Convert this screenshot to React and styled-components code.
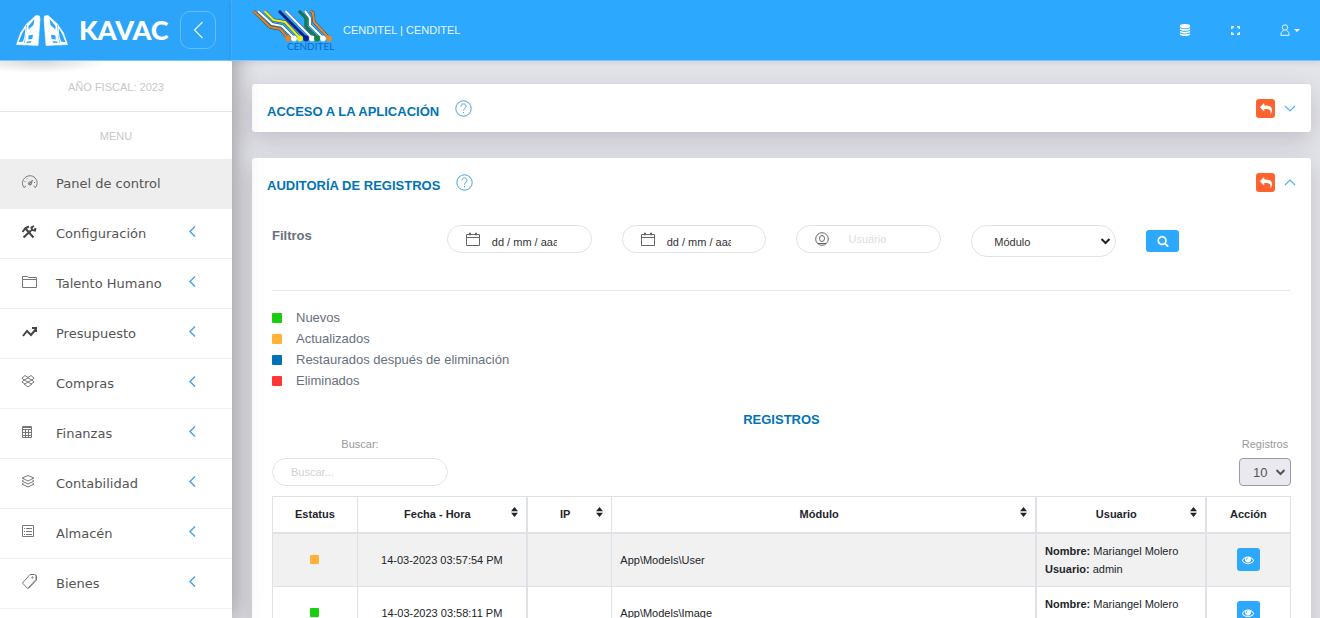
import React from "react";
import styled, { createGlobalStyle, css } from "styled-components";

const GlobalStyle = createGlobalStyle`
  *, *::before, *::after { box-sizing: border-box; }
  body {
    margin: 0;
    background: #e3e3ea;
    color: #212529;
    font-family: "Liberation Sans", Arial, sans-serif;
    font-size: 11px;
    line-height: 18px;
  }
  button, input, select { font-family: inherit; margin: 0; }
`;

const Shell = styled.div`
  display: flex;
  height: 100vh;
  overflow: hidden;
`;

const Sidebar = styled.aside`
  flex: 0 0 232px;
  z-index: 2;
  background: #fff;
  box-shadow: 0 2px 22px rgba(0, 0, 0, 0.16), 0 2px 28px rgba(0, 0, 0, 0.26);
`;

const Brand = styled.div`
  display: flex;
  align-items: center;
  height: 61px;
  padding: 0 15px 0 16px;
  background: #2ba4f9;
  border-right: 1px solid #45b2ff;
  border-bottom: 1px solid #7cc8fc;
`;

const BrandLink = styled.a`
  display: flex;
  align-items: center;
  gap: 11px;
  color: #fff;
  text-decoration: none;
  font: 900 27px/32px Lato, sans-serif;
`;

const CollapseButton = styled.button`
  display: grid;
  place-items: center;
  width: 36px;
  height: 38px;
  margin-left: auto;
  padding: 0;
  border: 1px solid #63bdfc;
  border-radius: 10px;
  background: transparent;
  color: #e4f4ff;
`;

const SideNote = styled.p`
  margin: 0;
  height: ${(p) => (p.$ruled ? 51 : 47)}px;
  padding-top: ${(p) => (p.$ruled ? 17 : 15)}px;
  border-bottom: ${(p) => (p.$ruled ? "1px solid #e6e6e6" : "0")};
  background: ${(p) => (p.$ruled ? "radial-gradient(ellipse 70px 12px at 38px 0, rgba(0, 0, 0, 0.16), transparent)" : "none")};
  color: #c8c8c8;
  text-align: center;
`;

const Menu = styled.nav`
  display: flex;
  flex-direction: column;
`;

const MenuLink = styled.a`
  display: flex;
  align-items: center;
  height: 50px;
  padding: 0 35px 0 20px;
  border-bottom: 1px solid ${(p) => (p.$active ? "#eee" : "#f1f1f1")};
  background: ${(p) => (p.$active ? "#eee" : "#fff")};
  color: #555;
  font: 13px/20px "DejaVu Sans", sans-serif;
  text-decoration: none;
`;

const MenuIcon = styled.span`
  display: flex;
  width: 36px;
  padding-bottom: 4px;
  color: ${(p) => (p.$solid ? "#444" : "#777")};
`;

const MenuArrow = styled.span`
  display: flex;
  margin-left: auto;
  padding-bottom: 4px;
  color: #4da5df;
`;

const Page = styled.div`
  flex: 1;
  min-width: 0;
  display: flex;
  flex-direction: column;
`;

const Topbar = styled.header`
  display: flex;
  align-items: center;
  flex: 0 0 61px;
  z-index: 3;
  padding: 0 20px 0 21px;
  background: #2ca8ff;
  border-bottom: 1px solid #7cc8fc;
  box-shadow: 0 1px 6px rgba(0, 0, 0, 0.1);
  color: #fff;
`;

const Institution = styled.span`
  margin-left: 5px;
  color: #e9f6ff;
`;

const Tools = styled.div`
  display: flex;
  align-items: center;
  gap: 40px;
  margin-left: auto;
`;

const ToolButton = styled.button`
  display: flex;
  align-items: center;
  gap: 4px;
  padding: 0;
  border: 0;
  background: none;
  color: #fff;
`;

const Main = styled.main`
  flex: 1;
  min-height: 0;
  display: flex;
  flex-direction: column;
  gap: 26px;
  padding: 23px 9px 30px 20px;
  overflow-y: auto;
  scrollbar-width: none;
`;

const Card = styled.section`
  flex: none;
  min-height: 48px;
  border-radius: 3px;
  background: #fff;
  box-shadow: 0 8px 24px rgba(0, 0, 0, 0.16);
`;

const CardHead = styled.header`
  display: flex;
  align-items: center;
  height: 47px;
  padding: 2px 15px 0;
`;

const Title = styled.h2`
  margin: 0;
  padding-top: 6px;
  color: #0073b7;
  font-size: 13px;
  line-height: 20px;
  text-transform: uppercase;
  text-align: ${(p) => (p.$centered ? "center" : "left")};
`;

const IconButton = styled.button`
  display: flex;
  padding: 0;
  border: 0;
  background: none;
  color: #50b4fa;
`;

const CardActions = styled.div`
  display: flex;
  align-items: center;
  gap: 9px;
  margin-left: auto;
`;

const Help = styled(IconButton)`
  margin-left: 16px;
  color: #4b9fd6;
`;

const fill = css`
  display: grid;
  place-items: center;
  padding: 0;
  border: 0;
  border-radius: 3px;
  color: #fff;
`;

const BackButton = styled.button`
  ${fill}
  width: 19px;
  height: 19px;
  background: #ff6430;
`;

const PrimaryButton = styled.button`
  ${fill}
  width: ${(p) => p.$width}px;
  height: ${(p) => p.$height}px;
  background: #2ca8ff;
`;

const CardBody = styled.div`
  padding: 20px 20px 30px;
`;

const Filters = styled.form`
  display: grid;
  grid-template-columns: repeat(6, minmax(0, 1fr));
  gap: 30px;
  align-items: start;
  padding-bottom: 33px;
  border-bottom: 1px solid #e8e8e8;
`;

const FiltersLabel = styled.strong`
  padding-top: 1px;
  color: #687080;
  font-size: 13px;
  line-height: 20px;
`;

const Field = styled.label`
  display: flex;
  align-items: center;
  height: 28px;
  padding-left: 18px;
  border: 1px solid #e3e3e3;
  border-radius: 30px;
  color: #666;
  & > svg { flex: none; }
`;

const FieldInput = styled.input`
  flex: 1;
  min-width: 0;
  width: 100%;
  height: 26px;
  padding: ${(p) => (p.$date ? "6px 34px 0 12px" : "0 18px 0 19px")};
  border: 0;
  outline: 0;
  background: transparent;
  color: #333;
  font-size: 11px;
  &::placeholder { color: ${(p) => (p.$date ? "#333" : "#ddd")}; opacity: 1; }
`;

const SelectWrap = styled.div`
  position: relative;
  display: flex;
  color: ${(p) => (p.$small ? "#555" : "#222")};
  & > svg {
    position: absolute;
    right: 5px;
    top: 50%;
    transform: translateY(-50%);
    pointer-events: none;
  }
`;

const ModuleSelect = styled.select`
  appearance: none;
  width: 100%;
  height: 32px;
  padding: 2px 22px 0;
  border: 1px solid #e3e3e3;
  border-radius: 30px;
  background: #fff;
  color: #333;
  font-size: 11px;
`;

const SearchCell = styled.div`
  padding-top: 5px;
`;

const Legend = styled.ul`
  margin: 0;
  padding: 16px 0 13px;
  list-style: none;
`;

const LegendItem = styled.li`
  display: flex;
  align-items: center;
  gap: 14px;
  color: #687080;
  font-size: 13px;
  line-height: 21px;
`;

const Mark = styled.span`
  display: inline-block;
  flex: none;
  width: ${(p) => p.$size}px;
  height: ${(p) => p.$size}px;
  border-radius: 1px;
  background: ${(p) => p.$color};
`;

const TableTools = styled.div`
  display: flex;
  justify-content: space-between;
  padding: 5px 0 10px;
`;

const ToolLabel = styled.label`
  display: flex;
  flex-direction: column;
  align-items: center;
  gap: 5px;
  color: #9a9a9a;
`;

const SearchInput = styled.input`
  width: 176px;
  height: 28px;
  padding: 0 18px;
  border: 1px solid #e3e3e3;
  border-radius: 30px;
  background: #fff;
  font-size: 11px;
  &::placeholder { color: #d2d2d2; opacity: 1; }
`;

const PageSelect = styled.select`
  appearance: none;
  width: 52px;
  height: 28px;
  padding: 1px 13px 0;
  border: 1px solid #9b9ba6;
  border-radius: 4px;
  background: #e9e9ef;
  color: #555;
  font-size: 13px;
`;

const Table = styled.table`
  width: 100%;
  table-layout: fixed;
  border-collapse: collapse;
`;

const Th = styled.th`
  position: relative;
  width: ${(p) => p.$width};
  height: 36px;
  padding: 0 ${(p) => (p.$sortable ? 9 : 0)}px 0 0;
  border: 1px solid #dee2e6;
  border-right-width: ${(p) => (p.$heavy ? 2 : 1)}px;
  border-bottom-width: 2px;
  & > svg { position: absolute; right: 8px; top: 10px; }
`;

const Row = styled.tr`
  background: ${(p) => (p.$striped ? "#f1f1f1" : "#fff")};
`;

const Td = styled.td`
  padding: 8px;
  border: 1px solid #dee2e6;
  border-right-width: ${(p) => (p.$heavy ? 2 : 1)}px;
  text-align: ${(p) => (p.$centered ? "center" : "left")};
  & > button { margin: 0 auto; }
`;

const Stroke = ({ w = 14, h = w, box = `0 0 ${w} ${h}`, sw = 1, children }) => (
  <svg width={w} height={h} viewBox={box} fill="none" stroke="currentColor" strokeWidth={sw} aria-hidden="true">
    {children}
  </svg>
);

const Solid = ({ size = 12, box = "0 0 1792 1792", d }) => (
  <svg width={size} height={size} viewBox={box} fill="currentColor" aria-hidden="true">
    <path d={d} />
  </svg>
);

const REPLY = "M1792 1120q0 166-127 451-3 7-10.5 24t-13.5 30-13 22q-12 17-28 17-15 0-23.5-10t-8.5-25q0-9 2.5-26.5t2.5-23.5q5-68 5-123 0-101-17.5-181t-48.5-138.5-80-101-105.5-69.5-133-42.5-154-21.5-175.5-6h-224v256q0 26-19 45t-45 19-45-19l-512-512q-19-19-19-45t19-45l512-512q19-19 45-19t45 19 19 45v256h224q713 0 875 403 53 134 53 333z";
const SEARCH = "M1216 832q0-185-131.5-316.5t-316.5-131.5-316.5 131.5-131.5 316.5 131.5 316.5 316.5 131.5 316.5-131.5 131.5-316.5zm512 832q0 52-38 90t-90 38q-54 0-90-38l-343-342q-179 124-399 124-143 0-273.5-55.5t-225-150-150-225-55.5-273.5 55.5-273.5 150-225 225-150 273.5-55.5 273.5 55.5 225 150 150 225 55.5 273.5q0 220-124 399l343 343q37 37 37 90z";
const EYE = "M1664 960q-152-236-381-353 61 104 61 225 0 185-131.5 316.5t-316.5 131.5-316.5-131.5-131.5-316.5q0-121 61-225-229 117-381 353 133 205 333.5 326.5t434.5 121.5 434.5-121.5 333.5-326.5zm-720-384q0-20-14-34t-34-14q-125 0-214.5 89.5t-89.5 214.5q0 20 14 34t34 14 34-14 14-34q0-86 61-147t147-61q20 0 34-14t14-34zm848 384q0 34-20 69-140 230-376.5 368.5t-499.5 138.5-499.5-139-376.5-368q-20-35-20-69t20-69q140-229 376.5-368t499.5-139 499.5 139 376.5 368q20 35 20 69z";
const DATABASE = "M896 768q237 0 443-43t325-127v170q0 69-103 128t-280 93.5-385 34.5-385-34.5-280-93.5-103-128v-170q119 84 325 127t443 43zm0 768q237 0 443-43t325-127v170q0 69-103 128t-280 93.5-385 34.5-385-34.5-280-93.5-103-128v-170q119 84 325 127t443 43zm0-384q237 0 443-43t325-127v170q0 69-103 128t-280 93.5-385 34.5-385-34.5-280-93.5-103-128v-170q119 84 325 127t443 43zm0-1152q208 0 385 34.5t280 93.5 103 128v128q0 69-103 128t-280 93.5-385 34.5-385-34.5-280-93.5-103-128v-128q0-69 103-128t280-93.5 385-34.5z";

const KavacMark = () => (
  <svg width="52" height="31" viewBox="0 0 52 31" aria-hidden="true">
    {["left", "right"].map((side) => (
      <g key={side} transform={side === "right" ? "translate(52 0) scale(-1 1)" : undefined}>
        <path d="M20 .5l3.500.5.500 3-2 26.500L.5 29.500 4.500 18l6-9z" fill="#fff" stroke="#fff" strokeWidth="0.600" strokeLinejoin="round" />
        <path
          d="M6 18.500l3.500-5.500-1 8.500-1.500 5-4.500.8zM12.500 11L18.500 4l-1 6-5 4.500zM12.500 20.500l4.500-.8-.7 4.300-4 .5zM11 9.500l-.8 8-1.500 10.500-.6-.1 2-10.400.2-7zM10.800 26.500l4.500-.3-.3 1.500-4.500.2z"
          fill="#2ba4f9"
        />
      </g>
    ))}
  </svg>
);

const circuits = [
  ["#e88224", 35, "M.5 2L17 18 27 20 35 29"],
  ["#fff", 41, "M5 2L19 15 29 17 41 29"],
  ["#f5ee16", 47, "M11.500 2L20.500 11 32 13 47 29"],
  ["#0a1e9b", 53, "M26 2L53 29"],
  ["#fff", 59, "M32.500 2L59 29"],
  ["#16813a", 64, "M46 2L53 9V18L64 29"],
  ["#fff", 70, "M52 2L57 9V16L70 29"],
  ["#e88a28", 76, "M57.500 2L60 4 61 13 76 29"],
];

const InstitutionLogo = () => (
  <svg width="85" height="43" viewBox="0 0 85 43" role="img" aria-label="CENDITEL">
    {circuits.map(([color, , d]) => (
      <g key={d} fill="none">
        <path d={d} stroke="#24445f" strokeWidth="3" />
        <path d={d} stroke={color} strokeWidth="2.200" />
      </g>
    ))}
    {circuits.map(([color, x]) => <circle key={x} cx={x} cy="29.500" r="2.900" fill={color} />)}
    <text x="34" y="41" fill="#1565c0" fontFamily="Lato, sans-serif" fontSize="10">CENDITEL</text>
  </svg>
);

const menuIcons = {
  gauge: (
    <Stroke w={19} h={15}>
      <path d="M6 12l-2 1.500C2 11 2 8 3.500 5.500 6 1.500 11 .8 14 3c3.500 2.500 4 7 1.500 10.500L13.500 12M9 10l3.500-4L11 10.500z" />
      <path d="M4.500 7.500h1M7 4.500l.7.700M14 8.500h1" />
      <circle cx="9.800" cy="9.500" r="1.500" />
    </Stroke>
  ),
  tools: (
    <Stroke w={18} h={16} sw={2}>
      <path d="M2.500 8l3-4L9 2.500M5 4l8.500 9.500" />
      <path d="M3.500 13.500l7.500-7M14 2l-2.500 1.500.5 2.500 3 .5L15.500 4" />
    </Stroke>
  ),
  folder: (
    <Stroke w={19} h={16}>
      <path d="M2.500 13.500v-11h5l1 1h8v10zM2.500 5.500h14" />
    </Stroke>
  ),
  trend: (
    <Stroke w={19} h={14} sw={2}>
      <path d="M3 11l4-5 4 4 5-6" />
      <path d="M12 3h4v4" />
    </Stroke>
  ),
  box: (
    <Stroke w={17} h={15}>
      <path d="M5 1.500L2 4l2 2-2 2 3 2 3-2 3 2 3-2-2-2 2-2-3-2.500-3 2zM4 6l4-2 4 2-4 2zM4 10l4 3 4-3" />
    </Stroke>
  ),
  calculator: (
    <Stroke w={14} h={16}>
      <path d="M2.500 2.500h9v11h-9zM2.500 3.500h9M2.500 5.500h9M5.500 6v7M8.500 6v7M3 8.500h8M3 11.500h8" />
    </Stroke>
  ),
  layers: (
    <Stroke w={16} h={15}>
      <path d="M8 1.500l6 2.500-6 3-6-3zM3.500 6L2 7l6 3 6-3-1.500-1M3.500 9L2 10l6 3 6-3-1.500-1" />
    </Stroke>
  ),
  list: (
    <Stroke w={16} h={15}>
      <path d="M2.500 1.500h11v11h-11zM4 4.500h1M4 7.500h1M4 10.500h1M6 4.500h6M6 7.500h6M6 10.500h6" />
    </Stroke>
  ),
  tag: (
    <Stroke w={19} h={17}>
      <path d="M10 1.500h4.500l1.500 1v4L7.500 15.500l-5-5.500zM15 1.500l1.500 1.500v4l-8 8.500" />
      <circle cx="12.500" cy="4.500" r="0.700" />
    </Stroke>
  ),
};

const menu = [
  ["Panel de control", "gauge"],
  ["Configuración", "tools"],
  ["Talento Humano", "folder"],
  ["Presupuesto", "trend"],
  ["Compras", "box"],
  ["Finanzas", "calculator"],
  ["Contabilidad", "layers"],
  ["Almacén", "list"],
  ["Bienes", "tag"],
];

const CalendarIcon = () => (
  <Stroke w={14} h={14}>
    <path d="M.5 2.500h13v11H.5zM.5 5.500h13M3.500 1h1v2h-1zM9.500 1h1v2h-1z" />
  </Stroke>
);

const UserIcon = () => (
  <Stroke w={14} h={14}>
    <circle cx="7" cy="7" r="6.300" />
    <ellipse cx="7" cy="6.500" rx="2.500" ry="3" />
    <path d="M3 11.500h8" />
  </Stroke>
);

const SelectArrow = () => (
  <Stroke w={11} h={8} sw={2}>
    <path d="M1.500 2l4 4 4-4" />
  </Stroke>
);

const SortIcon = () => (
  <svg width="7" height="10" viewBox="0 0 7 10" fill="#212529" aria-hidden="true">
    <path d="M3.500 0L7 4.200H0zM0 5.800h7L3.500 10z" />
  </svg>
);

function Panel({ title, open, children }) {
  return (
    <Card>
      <CardHead>
        <Title>{title}</Title>
        <Help type="button" aria-label="Ayuda">
          <Stroke w={17} h={17}>
            <circle cx="8.500" cy="8.500" r="7.700" />
            <path d="M6 6.500c0-3.500 5-3.500 5 0 0 2-2.500 2-2.500 4M8.500 12v1.200" />
          </Stroke>
        </Help>
        <CardActions>
          <BackButton type="button" aria-label="Volver"><Solid size={12} d={REPLY} /></BackButton>
          <IconButton type="button" aria-label={open ? "Contraer" : "Expandir"}>
            <Stroke w={12} h={7} sw={1.2}>
              <path d={open ? "M1 6l5-5 5 5" : "M1 1l5 5 5-5"} />
            </Stroke>
          </IconButton>
        </CardActions>
      </CardHead>
      {children}
    </Card>
  );
}

const GREEN = "#18ce0f";
const ORANGE = "#ffb236";

const legend = [
  ["Nuevos", GREEN],
  ["Actualizados", ORANGE],
  ["Restaurados después de eliminación", "#0073b7"],
  ["Eliminados", "#ff3636"],
];

const columns = [
  { label: "Estatus", width: "8.333%" },
  { label: "Fecha - Hora", width: "16.667%", sort: true, heavy: true },
  { label: "IP", width: "8.333%", sort: true },
  { label: "Módulo", width: "41.667%", sort: true, heavy: true },
  { label: "Usuario", width: "16.667%", sort: true, heavy: true },
  { label: "Acción", width: "8.333%" },
];

const records = [
  { color: ORANGE, date: "14-03-2023 03:57:54 PM", model: "App\\Models\\User" },
  { color: GREEN, date: "14-03-2023 03:58:11 PM", model: "App\\Models\\Image" },
];

export default function App() {
  return (
    <>
      <GlobalStyle />
      <Shell>
        <Sidebar>
          <Brand>
            <BrandLink href="#"><KavacMark />KAVAC</BrandLink>
            <CollapseButton type="button" aria-label="Contraer menú">
              <Stroke w={11} h={18} sw={1.2}><path d="M9.500 1L1.500 9l8 8" /></Stroke>
            </CollapseButton>
          </Brand>
          <SideNote $ruled>AÑO FISCAL: 2023</SideNote>
          <SideNote>MENU</SideNote>
          <Menu>
            {menu.map(([label, icon], i) => (
              <MenuLink key={label} href="#" $active={i === 0}>
                <MenuIcon $solid={icon === "tools" || icon === "trend"}>{menuIcons[icon]}</MenuIcon>
                {label}
                {i > 0 && (
                  <MenuArrow>
                    <Stroke w={9} h={11} sw={1.5}><path d="M7 .5L2 5.500l5 5" /></Stroke>
                  </MenuArrow>
                )}
              </MenuLink>
            ))}
          </Menu>
        </Sidebar>
        <Page>
          <Topbar>
            <InstitutionLogo />
            <Institution>CENDITEL | CENDITEL</Institution>
            <Tools>
              <ToolButton type="button" aria-label="Respaldos"><Solid size={12} d={DATABASE} /></ToolButton>
              <ToolButton type="button" aria-label="Pantalla completa">
                <Stroke w={9} h={9} sw={1.4}>
                  <path d="M.8 3V.8H3M6 .8h2.200V3M8.200 6v2.200H6M3 8.200H.8V6" />
                </Stroke>
              </ToolButton>
              <ToolButton type="button" aria-label="Usuario">
                <Stroke w={10} h={12} sw={0.9}>
                  <circle cx="5" cy="3.500" r="2.700" />
                  <path d="M3.500 6.500C1.500 7.500 1 9 .8 11.300h8.400C9 9 8.500 7.500 6.500 6.500" />
                </Stroke>
                <svg width="6" height="3" viewBox="0 0 6 3" fill="currentColor" aria-hidden="true"><path d="M0 0h6L3 3z" /></svg>
              </ToolButton>
            </Tools>
          </Topbar>
          <Main>
            <Panel title="Acceso a la aplicación" />
            <Panel title="Auditoría de registros" open>
              <CardBody>
                <Filters>
                  <FiltersLabel>Filtros</FiltersLabel>
                  <Field><CalendarIcon /><FieldInput $date aria-label="Desde" placeholder="dd / mm / aaaa" /></Field>
                  <Field><CalendarIcon /><FieldInput $date aria-label="Hasta" placeholder="dd / mm / aaaa" /></Field>
                  <Field><UserIcon /><FieldInput aria-label="Usuario" placeholder="Usuario" /></Field>
                  <SelectWrap>
                    <ModuleSelect aria-label="Módulo"><option>Módulo</option></ModuleSelect>
                    <SelectArrow />
                  </SelectWrap>
                  <SearchCell>
                    <PrimaryButton type="button" $width={33} $height={22} aria-label="Buscar"><Solid size={12} d={SEARCH} /></PrimaryButton>
                  </SearchCell>
                </Filters>
                <Legend>
                  {legend.map(([label, color]) => (
                    <LegendItem key={label}><Mark $size={10} $color={color} />{label}</LegendItem>
                  ))}
                </Legend>
                <Title $centered>Registros</Title>
                <TableTools>
                  <ToolLabel>Buscar:<SearchInput placeholder="Buscar..." /></ToolLabel>
                  <ToolLabel>
                    Registros
                    <SelectWrap $small>
                      <PageSelect><option>10</option></PageSelect>
                      <SelectArrow />
                    </SelectWrap>
                  </ToolLabel>
                </TableTools>
                <Table>
                  <thead>
                    <tr>
                      {columns.map((c) => (
                        <Th key={c.label} scope="col" $width={c.width} $heavy={c.heavy} $sortable={c.sort}>
                          {c.label}
                          {c.sort && <SortIcon />}
                        </Th>
                      ))}
                    </tr>
                  </thead>
                  <tbody>
                    {records.map((r, i) => (
                      <Row key={r.date} $striped={i % 2 === 0}>
                        <Td $centered><Mark $size={9} $color={r.color} /></Td>
                        <Td $centered $heavy>{r.date}</Td>
                        <Td />
                        <Td $heavy>{r.model}</Td>
                        <Td $heavy>
                          <b>Nombre:</b> Mariangel Molero<br />
                          <b>Usuario:</b> admin
                        </Td>
                        <Td $centered>
                          <PrimaryButton type="button" $width={23} $height={23} aria-label="Ver detalles"><Solid size={12} d={EYE} /></PrimaryButton>
                        </Td>
                      </Row>
                    ))}
                  </tbody>
                </Table>
              </CardBody>
            </Panel>
          </Main>
        </Page>
      </Shell>
    </>
  );
}
